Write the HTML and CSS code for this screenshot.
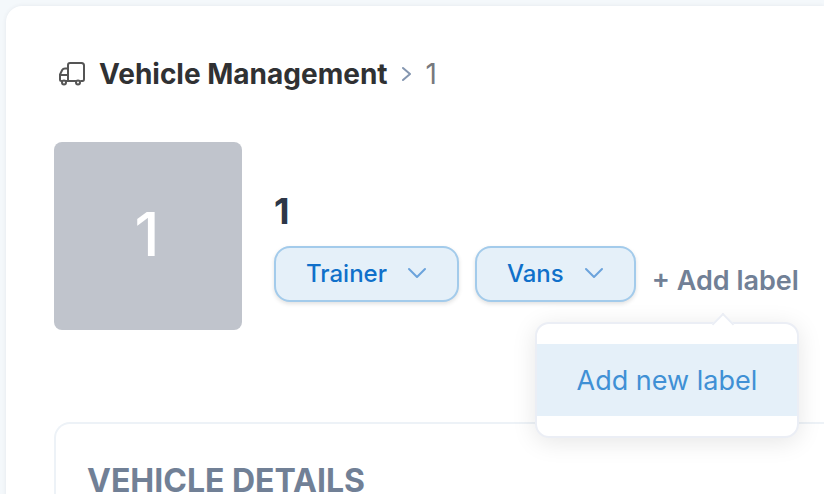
FILE: index.html
```html
<!DOCTYPE html>
<html lang="en">
<head>
    <meta charset="UTF-8">
    <meta name="viewport" content="width=device-width, initial-scale=1.0">
    <title>Vehicle Management</title>
    <link rel="stylesheet" href="styles.css">
</head>
<body>

    <main class="panel">
        <nav class="breadcrumb" aria-label="Breadcrumb">
            <svg class="truck-icon" viewBox="0 0 28 26" aria-hidden="true">
                <path d="M10 19V4Q10 2 12 2H23.500Q26 2 26 4.500V18Q26 20 24.500 20H23M17.500 20H8.500M10 7.500H7Q5 7.500 4.200 9L2 13.500V18.500Q2 20 3.500 20M2.500 14H9.500"/>
                <circle cx="6" cy="21.500" r="2"/>
                <circle cx="20" cy="21.500" r="2"/>
            </svg>
            <a href="#" class="breadcrumb-link">Vehicle Management</a>
            <svg class="separator" viewBox="0 0 10 18" aria-hidden="true">
                <path d="M1 3l7 6-7 6"/>
            </svg>
            <span class="breadcrumb-current">1</span>
        </nav>

        <header class="vehicle">
            <div class="avatar">1</div>
            <div class="vehicle-info">
                <h1>1</h1>
                <div class="labels">
                    <button type="button" class="label-btn">
                        Trainer
                        <svg class="chevron" viewBox="0 0 20 12" aria-hidden="true">
                            <path d="M2 2l8 8 8-8"/>
                        </svg>
                    </button>
                    <button type="button" class="label-btn">
                        Vans
                        <svg class="chevron" viewBox="0 0 20 12" aria-hidden="true">
                            <path d="M2 2l8 8 8-8"/>
                        </svg>
                    </button>
                    <div class="add-label">
                        <button type="button" class="add-btn">+ Add label</button>
                        <div class="dropdown">
                            <button type="button" class="dropdown-item">Add new label</button>
                        </div>
                    </div>
                </div>
            </div>
        </header>

        <section class="details">
            <h2>VEHICLE DETAILS</h2>
        </section>
    </main>

</body>
</html>
```

FILE: styles.css
```css
* {
    box-sizing: border-box;
}

body {
    font-family: Inter, "Liberation Sans", sans-serif;
    margin: 0;
    padding: 6px 0 0 6px;
    background-color: #f4f8fb;
}

button {
    font-family: inherit;
    cursor: pointer;
}

svg {
    fill: none;
    stroke-linecap: round;
    stroke-linejoin: round;
}

.panel {
    padding: 52px 0 0 48px;
    background-color: #fff;
    border-radius: 16px 0 0 0;
    box-shadow: 0 0 4px rgba(45, 55, 72, 0.08);
}

.breadcrumb {
    display: flex;
    align-items: center;
    height: 32px;
    padding-left: 4px;
    font-size: 28px;
    line-height: 32px;
}

.truck-icon {
    width: 28px;
    height: 26px;
    margin-right: 13px;
    stroke: #555;
    stroke-width: 2;
}

.breadcrumb-link {
    color: #303133;
    font-weight: 700;
    text-decoration: none;
}

.separator {
    width: 10px;
    height: 18px;
    margin: 0 14px;
    stroke: #8496b0;
    stroke-width: 2;
}

.breadcrumb-current {
    color: #77797e;
}

.vehicle {
    display: flex;
    gap: 32px;
    margin-top: 52px;
}

.avatar {
    display: flex;
    align-items: center;
    justify-content: center;
    flex-shrink: 0;
    width: 188px;
    height: 188px;
    padding: 0 2px 4px 0;
    border-radius: 8px;
    background-color: #c0c4cc;
    color: #fff;
    font-size: 60px;
    font-weight: 500;
}

.vehicle-info {
    padding-top: 48px;
}

h1 {
    margin: 0 0 14px;
    color: #2d3748;
    font-size: 36px;
    font-weight: 700;
    line-height: 42px;
}

.labels {
    display: flex;
    gap: 16px;
    white-space: nowrap;
}

.label-btn {
    display: flex;
    align-items: center;
    gap: 20px;
    height: 56px;
    padding: 0 30px 2px;
    border: 2px solid #a3cbeb;
    border-radius: 16px;
    background-color: #e5f0f9;
    box-shadow: 0 2px 4px rgba(0, 0, 0, 0.12);
    color: #1070ca;
    font-size: 24px;
    font-weight: 500;
}

.chevron {
    width: 20px;
    height: 12px;
    stroke: #6ba3dc;
    stroke-width: 2;
}

.add-label {
    position: relative;
    padding-top: 16px;
}

.add-btn {
    padding: 0;
    border: none;
    background: none;
    color: #718096;
    font-size: 27px;
    font-weight: 600;
    line-height: 38px;
}

.dropdown {
    position: absolute;
    top: 76px;
    right: 0;
    width: 264px;
    padding: 20px 0;
    border: 2px solid #ebeef5;
    border-radius: 14px;
    background-color: #fff;
    box-shadow: 0 4px 24px rgba(0, 0, 0, 0.1);
}

/* arrow pointing at the add button */
.dropdown::before {
    content: "";
    position: absolute;
    top: -8px;
    right: 66px;
    width: 14px;
    height: 14px;
    border: solid #ebeef5;
    border-width: 2px 0 0 2px;
    background-color: #fff;
    transform: rotate(45deg);
}

.dropdown-item {
    width: 100%;
    height: 72px;
    padding: 0;
    border: none;
    background-color: #e5f0f9;
    color: #4090d5;
    font-size: 27px;
}

.details {
    margin-top: 92px;
    padding: 36px 31px 0;
    border: 2px solid #edf2f7;
    border-width: 2px 0 0 2px;
    border-radius: 16px 0 0 0;
}

h2 {
    margin: 0;
    color: #718096;
    font-size: 32px;
    font-weight: 700;
    line-height: 42px;
}
```
